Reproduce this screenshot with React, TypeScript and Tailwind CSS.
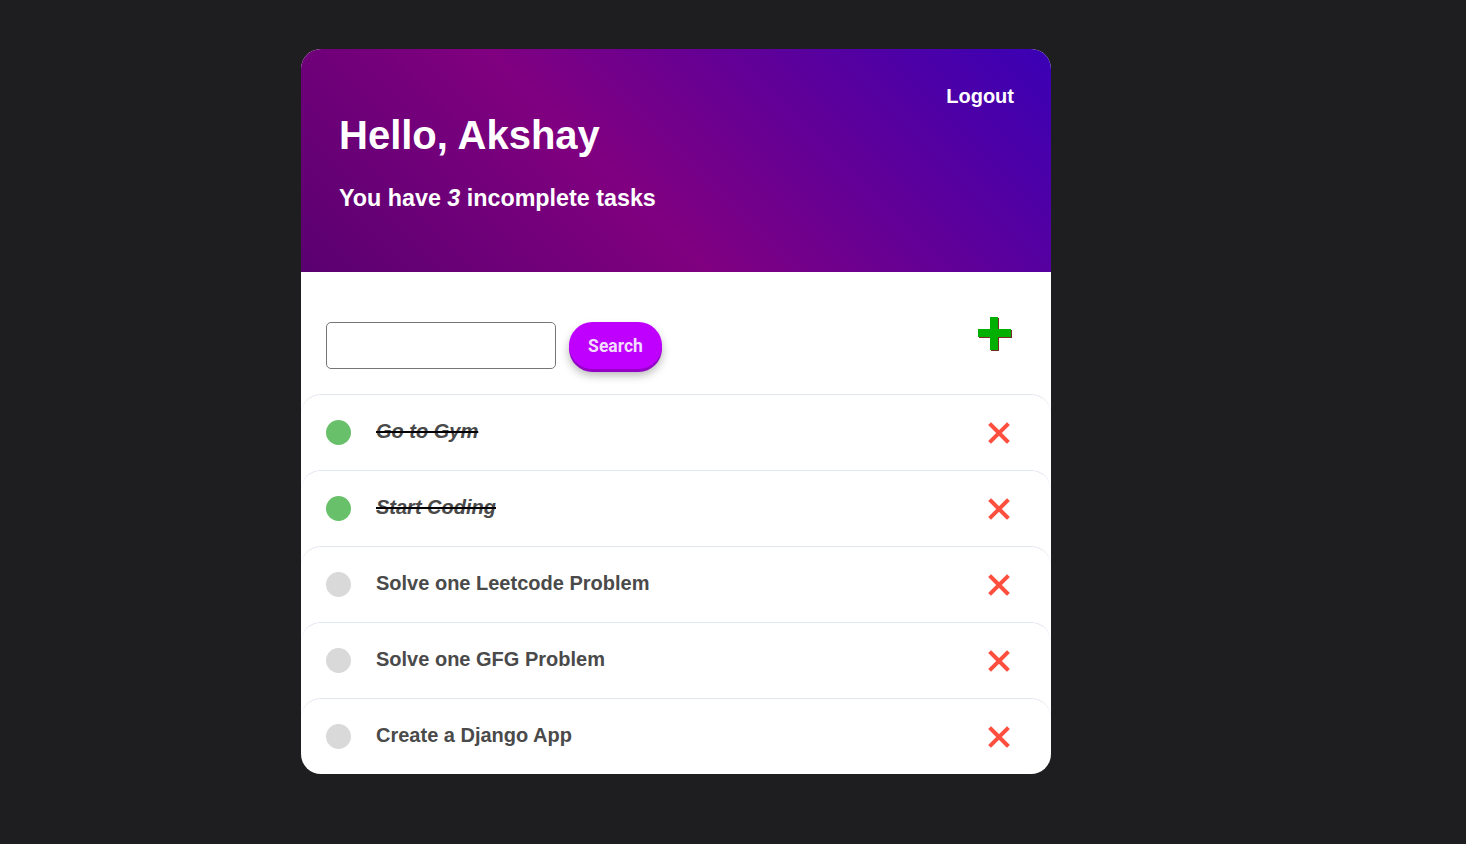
import React from "react";

const tasks = [
  { title: "Go to Gym", done: true },
  { title: "Start Coding", done: true },
  { title: "Solve one Leetcode Problem", done: false },
  { title: "Solve one GFG Problem", done: false },
  { title: "Create a Django App", done: false },
];

function XIcon() {
  return (
    <svg width="22" height="22" viewBox="0 0 22 22">
      <path d="M3 3 L19 19 M19 3 L3 19" stroke="#ff4f3f" strokeWidth="4" strokeLinecap="square" />
    </svg>
  );
}

function PlusIcon() {
  return (
    <svg width="35" height="35" viewBox="0 0 35 35">
      <g fill="#7a2a2a">
        <rect x="13" y="1" width="8" height="33" />
        <rect x="1" y="13" width="33" height="8" />
      </g>
      <g fill="#00b000">
        <rect x="12" y="0" width="8" height="33" />
        <rect x="0" y="12" width="33" height="8" />
      </g>
    </svg>
  );
}

export default function App() {
  return (
    <div className="min-h-[844px] w-full bg-[#1e1e20] pt-[49px]" style={{ fontFamily: '"Liberation Sans", Arial, sans-serif' }}>
      <div className="ml-[301px] w-[750px] overflow-hidden rounded-[20px] bg-white">
        <div className="h-[223px] bg-[linear-gradient(45deg,#5a0070_0%,#800080_42%,#3a00b5_100%)] pl-[38px] pr-[37px] pt-[34px] text-white">
          <div className="flex justify-end">
            <span className="text-[20px] font-bold leading-[26px]">Logout</span>
          </div>
          <h1 className="mt-[3px] text-[40px] font-bold leading-[46px]">Hello, Akshay</h1>
          <p className="mt-[26px] text-[23.3px] font-bold leading-[28px]">
            You have <em>3</em> incomplete tasks
          </p>
        </div>
        <div className="flex items-start justify-between pl-[25px] pr-[38px] pt-[50px] pb-[25px]">
          <div className="flex items-center gap-[13px]">
            <input className="h-[47px] w-[230px] rounded-[5px] border border-[#767676] bg-white" />
            <button
              className="h-[47px] w-[93px] rounded-full bg-[#bf00ff] pt-[1px] text-[17.5px] font-bold text-[#f2dcff] shadow-[0_3px_0_#9500c8,0_6px_10px_rgba(0,0,0,0.3)]"
              style={{ fontFamily: 'Roboto, "Liberation Sans", sans-serif' }}
            >
              Search
            </button>
          </div>
          <div className="-mt-[5px]">
            <PlusIcon />
          </div>
        </div>
        <ul>
          {tasks.map((t) => (
            <li
              key={t.title}
              className="flex h-[76px] items-center rounded-[20px] border-t border-[#e2e6ee] pl-[25px] pr-[41px]"
            >
              <span className={`h-[25px] w-[25px] rounded-full ${t.done ? "bg-[#69c06a]" : "bg-[#d9d9d9]"}`} />
              <span
                className={`ml-[25px] flex-1 pb-[4px] text-[20px] font-bold text-[#4a4a4a] ${t.done ? "italic line-through decoration-black decoration-2" : ""}`}
              >
                {t.title}
              </span>
              <XIcon />
            </li>
          ))}
        </ul>
      </div>
    </div>
  );
}
